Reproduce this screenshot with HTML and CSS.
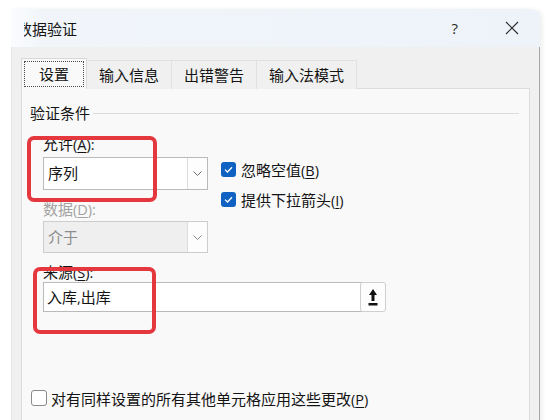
FILE: index.html
```html
<!DOCTYPE html>
<html lang="zh-CN">
<head>
<meta charset="utf-8">
<title>数据验证</title>
<link rel="stylesheet" href="styles.css">
</head>
<body>
<div class="window">
  <div class="titlebar">
    <div class="title-clip"><span class="title-text">数据验证</span></div>
    <span class="tb-help">?</span>
    <span class="tb-close"><svg width="14" height="14" viewBox="0 0 14 14"><path d="M1 1 L13 13 M13 1 L1 13" stroke="#2b2b2b" stroke-width="1.1" fill="none"/></svg></span>
  </div>
  <div class="client">
    <div class="tabs">
      <div class="tab active"><span class="focus">设置</span></div>
      <div class="tab">输入信息</div>
      <div class="tab">出错警告</div>
      <div class="tab">输入法模式</div>
    </div>
    <div class="panel">
      <div class="legend"><span>验证条件</span><i class="rule"></i></div>
      <div class="criteria">
        <div class="fields">
          <div class="label">允许<span class="lat">(<u>A</u>):</span></div>
          <div class="combo">
            <span class="value">序列</span>
            <span class="drop"><svg width="9" height="5" viewBox="0 0 9 5"><polyline points="0.5,0.5 4.5,4.5 8.5,0.5" fill="none" stroke="#6b6b6b" stroke-width="1"/></svg></span>
          </div>
          <div class="label disabled spaced">数据<span class="lat">(<u>D</u>):</span></div>
          <div class="combo off">
            <span class="value">介于</span>
            <span class="drop"><svg width="9" height="5" viewBox="0 0 9 5"><polyline points="0.5,0.5 4.5,4.5 8.5,0.5" fill="none" stroke="#8a8a8a" stroke-width="1"/></svg></span>
          </div>
        </div>
        <div class="checks">
          <div class="check"><span class="box on"><svg width="11" height="11" viewBox="0 0 11 11"><polyline points="2,5.6 4.5,8 9,3.2" fill="none" stroke="#fff" stroke-width="1.3"/></svg></span><span>忽略空值<span class="lat">(<u>B</u>)</span></span></div>
          <div class="check"><span class="box on"><svg width="11" height="11" viewBox="0 0 11 11"><polyline points="2,5.6 4.5,8 9,3.2" fill="none" stroke="#fff" stroke-width="1.3"/></svg></span><span>提供下拉箭头<span class="lat">(<u>I</u>)</span></span></div>
        </div>
      </div>
      <div class="label source-label">来源<span class="lat">(<u>S</u>):</span></div>
      <div class="source-row">
        <div class="input">入库<span class="lat">,</span>出库</div>
        <div class="pick"><svg width="10" height="17" viewBox="0 0 10 17"><path d="M5 0 L9 6 H6.5 V12 H3.5 V6 H1 Z" fill="#111"/><rect x="0.5" y="14" width="9" height="2.5" fill="#111"/></svg></div>
      </div>
      <div class="check apply"><span class="box off-box"></span><span>对有同样设置的所有其他单元格应用这些更改<span class="lat">(<u>P</u>)</span></span></div>
    </div>
  </div>
</div>
<div class="mark mark-allow"></div>
<div class="mark mark-source"></div>
</body>
</html>
```
FILE: styles.css
```css
html, body {
  margin: 0;
  padding: 0;
}
body {
  position: relative;
  width: 554px;
  height: 420px;
  overflow: hidden;
  background: #ffffff;
  font-family: "Noto Sans CJK SC", sans-serif;
  font-size: 15px;
  color: #141414;
}
.lat {
  font-family: "Open Sans", "Liberation Sans", sans-serif;
  font-size: 14.5px;
}
u {
  text-decoration: underline;
  text-underline-offset: 2px;
}
.window {
  margin: 9px 0 0 11px;
  width: 529px;
  height: 420px;
  border-top-right-radius: 9px;
  overflow: hidden;
  box-shadow: 3px 0 4px rgba(0, 0, 0, 0.06);
}
.titlebar {
  height: 38px;
  display: flex;
  align-items: center;
  background: linear-gradient(to right, #fbfcfe 0, #f1f5fa 30px, #eef3f9 100%);
}
.title-clip {
  margin-left: 13px;
  overflow: hidden;
  font-size: 15px;
}
.title-text {
  display: block;
  margin-left: -7px;
  white-space: nowrap;
}
.tb-help {
  margin-left: auto;
  margin-right: 47px;
  font-family: "Open Sans", "Liberation Sans", sans-serif;
  font-size: 15px;
  color: #2b2b2b;
}
.tb-close {
  display: flex;
  margin-right: 21px;
}
.client {
  height: 382px;
  box-sizing: border-box;
  padding: 11px 0 0 9px;
  background: #f0f0f0;
  border-right: 1px solid #a6a6a6;
  border-left: 1px solid #e6e6e6;
}
.tabs {
  display: flex;
  align-items: flex-end;
  height: 31px;
  margin-bottom: -1px;
  position: relative;
  z-index: 1;
}
.tab {
  height: 29px;
  box-sizing: border-box;
  padding: 0 12px;
  line-height: 28px;
  background: #f0f0f0;
  border-top: 1px solid #e1e1e1;
  border-right: 1px solid #e1e1e1;
}
.tab.active {
  height: 31px;
  padding: 2px;
  background: #f9f9f9;
  border: 1px solid #d9d9d9;
  border-bottom: none;
}
.focus {
  display: block;
  height: 26px;
  box-sizing: border-box;
  padding: 0 14px;
  line-height: 24px;
  border: 1px dotted #4a4a4a;
}
.panel {
  width: 509px;
  height: 340px;
  box-sizing: border-box;
  padding: 14px 10px 0 8px;
  background: #f9f9f9;
  border: 1px solid #dcdcdc;
}
.legend {
  display: flex;
  align-items: center;
  height: 20px;
  line-height: 20px;
}
.rule {
  flex: 1;
  height: 1px;
  margin-left: 3px;
  background: #dcdcdc;
}
.criteria {
  display: flex;
  margin-top: 11px;
  padding-left: 13px;
}
.fields {
  width: 165px;
}
.label {
  height: 20px;
  line-height: 20px;
}
.label.disabled {
  color: #a3a3a3;
}
.spaced {
  margin-top: 9px;
}
.combo {
  display: flex;
  height: 33px;
  margin-top: 3px;
  box-sizing: border-box;
  background: #ffffff;
  border: 1px solid #bababa;
}
.combo.off {
  height: 32px;
  margin-top: 2px;
  background: #efefef;
  border-color: #cdcdcd;
  color: #8c8c8c;
}
.value {
  flex: 1;
  padding-left: 4px;
  line-height: 30px;
}
.drop {
  width: 19px;
  display: flex;
  align-items: center;
  justify-content: center;
  border-left: 1px solid #dcdcdc;
  background: #fdfdfd;
}
.checks {
  margin-left: 13px;
  padding-top: 20px;
}
.check {
  display: flex;
  align-items: center;
  gap: 5px;
  height: 30px;
}
.box {
  display: flex;
  align-items: center;
  justify-content: center;
  width: 15px;
  height: 15px;
  box-sizing: border-box;
  border-radius: 3px;
}
.box.on {
  background: #0f62c1;
}
.box.off-box {
  width: 16px;
  height: 16px;
  background: #ffffff;
  border: 1px solid #8a8a8a;
}
.source-label {
  margin: 9px 0 0 13px;
}
.source-row {
  display: flex;
  align-items: center;
  margin-left: 13px;
}
.input {
  width: 319px;
  height: 30px;
  box-sizing: border-box;
  padding-left: 3px;
  line-height: 28px;
  background: #ffffff;
  border: 1px solid #bababa;
}
.pick {
  display: flex;
  align-items: center;
  justify-content: center;
  width: 26px;
  height: 30px;
  margin-left: -2px;
  box-sizing: border-box;
  background: #fdfdfd;
  border: 1px solid #cfcfcf;
  border-radius: 3px;
}
.apply {
  margin-top: 71px;
  margin-left: 1px;
  gap: 4px;
}
.mark {
  position: absolute;
  box-sizing: border-box;
  border: 4px solid #e4383e;
  border-radius: 7px;
}
.mark-allow {
  left: 27px;
  top: 136px;
  width: 130px;
  height: 66px;
}
.mark-source {
  left: 33px;
  top: 267px;
  width: 123px;
  height: 67px;
}
```
